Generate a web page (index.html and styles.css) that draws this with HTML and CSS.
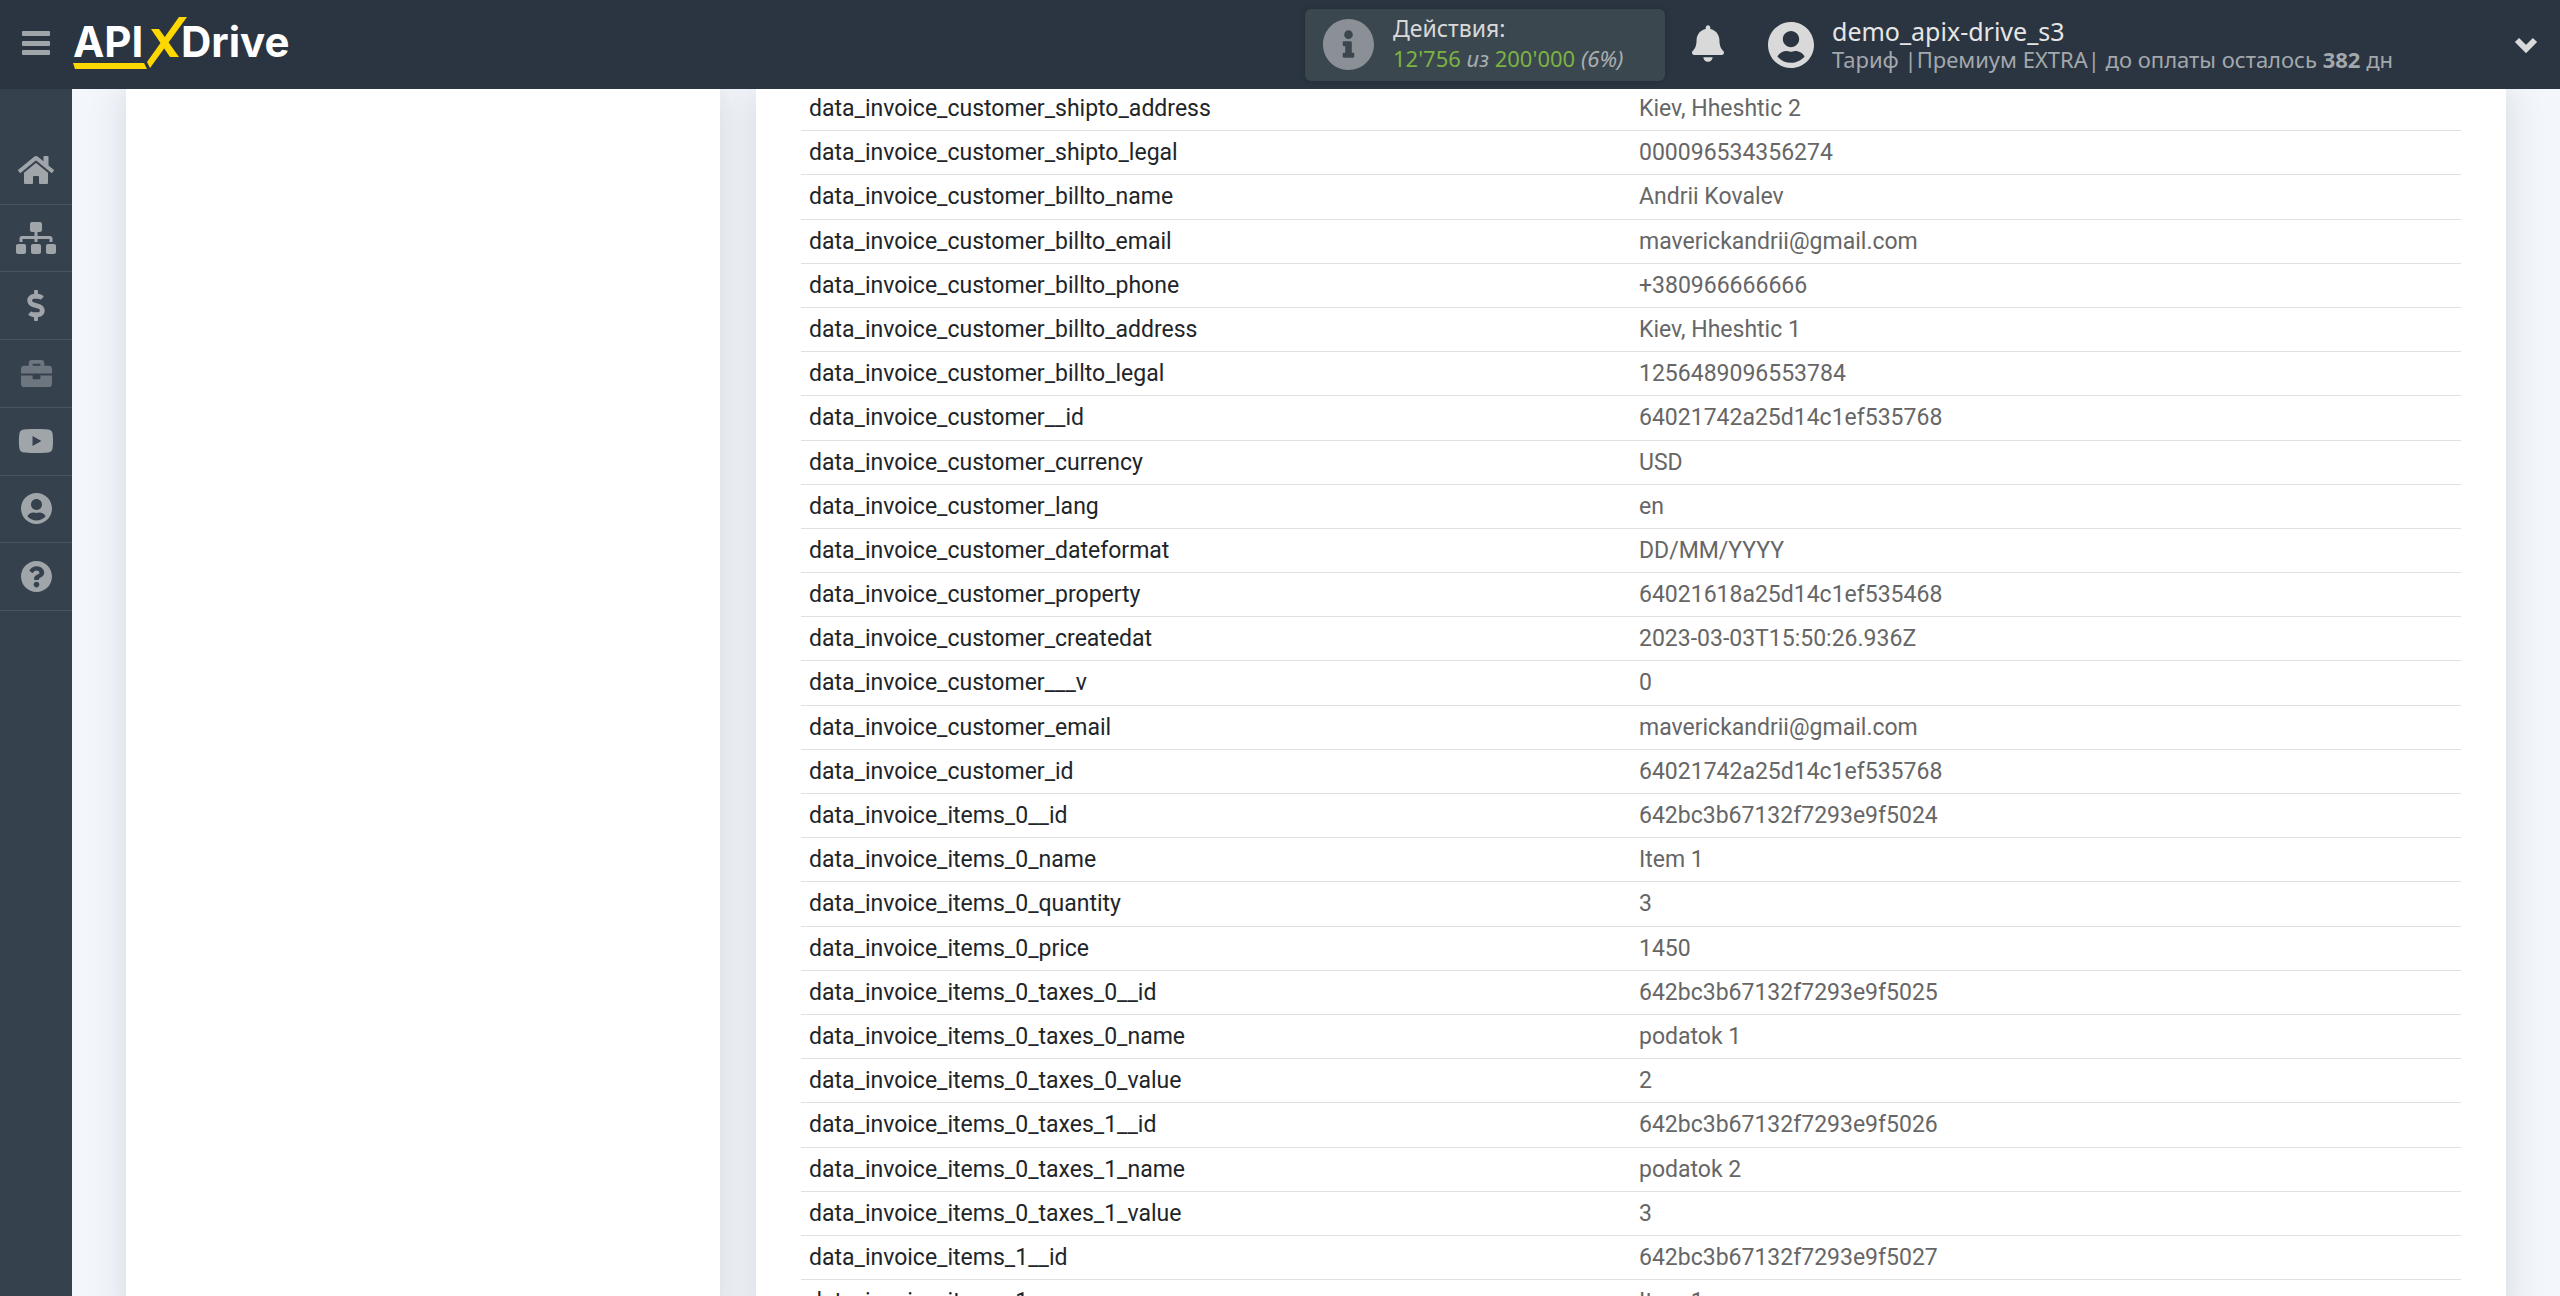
FILE: index.html
```html
<!DOCTYPE html>
<html lang="ru">
<head>
<meta charset="utf-8">
<title>APIXDrive</title>
<link rel="stylesheet" href="styles.css">
</head>
<body>
<header class="topbar">
  <button class="menu-toggle" type="button" aria-label="Меню">
    <svg width="28" height="26" viewBox="0 0 28 26"><rect y="1" width="28" height="5" rx="1"/><rect y="11" width="28" height="5" rx="1"/><rect y="20" width="28" height="5" rx="1"/></svg>
  </button>
  <a class="logo" href="#" aria-label="APIXDrive">
    <svg width="230" height="56" viewBox="0 0 230 56">
      <text class="logo-text" x="0" y="43">API</text>
      <text class="logo-text" x="108" y="43">Drive</text>
      <path class="logo-mark" d="M0 49H71L74 55H2Z"/>
      <path class="logo-mark" d="M106 3H114L77 54L74 48Z"/>
      <path class="logo-mark" d="M78 15H86L106 43H97Z"/>
    </svg>
  </a>
  <section class="usage">
    <svg class="usage-icon" viewBox="8 8 496 496"><path d="M256 8C119.043 8 8 119.083 8 256c0 136.997 111.043 248 248 248s248-111.003 248-248C504 119.083 392.957 8 256 8zm0 110c23.196 0 42 18.804 42 42s-18.804 42-42 42-42-18.804-42-42 18.804-42 42-42zm56 254c0 6.627-5.373 12-12 12h-88c-6.627 0-12-5.373-12-12v-24c0-6.627 5.373-12 12-12h12v-64h-12c-6.627 0-12-5.373-12-12v-24c0-6.627 5.373-12 12-12h64c6.627 0 12 5.373 12 12v100h12c6.627 0 12 5.373 12 12v24z"/></svg>
    <div class="usage-text">
      <div class="usage-title">Действия:</div>
      <div class="usage-count"><b>12'756</b> <i>из</i> <b>200'000</b> <i>(6%)</i></div>
    </div>
  </section>
  <button class="bell" type="button" aria-label="Уведомления">
    <svg width="32" height="37" viewBox="0 0 448 512"><path d="M224 512c35.32 0 63.97-28.65 63.97-64H160.03c0 35.35 28.65 64 63.97 64zm215.39-149.71c-19.32-20.76-55.47-51.99-55.47-154.29 0-77.7-54.48-139.9-127.94-155.16V32c0-17.67-14.32-32-31.98-32s-31.98 14.33-31.98 32v20.84C118.56 68.1 64.08 130.3 64.08 208c0 102.3-36.15 133.53-55.47 154.29-6 6.45-8.66 14.16-8.61 21.71.11 16.4 12.98 32 32.1 32h383.8c19.12 0 32-15.6 32.1-32 .05-7.55-2.61-15.27-8.61-21.71z"/></svg>
  </button>
  <button class="account" type="button">
    <svg class="avatar" viewBox="0 8 496 496"><path d="M248 8C111 8 0 119 0 256s111 248 248 248 248-111 248-248S385 8 248 8zm0 96c48.600 0 88 39.400 88 88s-39.400 88-88 88-88-39.400-88-88 39.400-88 88-88zm0 344c-58.700 0-111.300-26.600-146.500-68.200 18.800-35.400 55.600-59.800 98.500-59.800 2.400 0 4.800.4 7.100 1.100 13 4.200 26.600 6.900 40.900 6.900 14.300 0 28-2.700 40.900-6.900 2.300-.7 4.700-1.100 7.100-1.100 42.900 0 79.700 24.400 98.500 59.800C359.300 421.400 306.700 448 248 448z"/></svg>
    <span class="account-text">
      <span class="account-name">demo_apix-drive_s3</span>
      <span class="account-plan">Тариф |Премиум EXTRA| до оплаты осталось <b>382</b> дн</span>
    </span>
    <svg class="chevron" width="24" height="17" viewBox="0 0 24 17"><path d="M3 4L12 13L21 4"/></svg>
  </button>
</header>

<nav class="sidebar">
  <div class="sidebar-list">
    <a href="#" aria-label="Главная"><svg width="36" height="32" viewBox="0 0 576 512"><path d="M280.370 148.260L96 300.110V464a16 16 0 0 0 16 16l112.060-.29a16 16 0 0 0 15.920-16V368a16 16 0 0 1 16-16h64a16 16 0 0 1 16 16v95.640a16 16 0 0 0 16 16.050L464 480a16 16 0 0 0 16-16V300L295.670 148.260a12.190 12.190 0 0 0-15.300 0zM571.600 251.470L488 182.560V44.050a12 12 0 0 0-12-12h-56a12 12 0 0 0-12 12v72.610L318.470 43a48 48 0 0 0-61 0L4.340 251.470a12 12 0 0 0-1.600 16.900l25.500 31A12 12 0 0 0 45.150 301l235.220-193.740a12.190 12.190 0 0 1 15.300 0L530.900 301a12 12 0 0 0 16.900-1.600l25.500-31a12 12 0 0 0-1.700-16.930z"/></svg></a>
    <a href="#" aria-label="Связи"><svg width="40" height="32" viewBox="0 0 640 512"><path d="M128 352H32c-17.670 0-32 14.330-32 32v96c0 17.670 14.330 32 32 32h96c17.670 0 32-14.330 32-32v-96c0-17.670-14.330-32-32-32zm-24-80h192v48h48v-48h192v48h48v-57.590c0-21.170-17.230-38.410-38.410-38.410H344v-64h40c17.670 0 32-14.330 32-32V32c0-17.670-14.330-32-32-32H256c-17.670 0-32 14.330-32 32v96c0 17.670 14.330 32 32 32h40v64H94.410C73.230 224 56 241.230 56 262.410V320h48v-48zm264 80h-96c-17.670 0-32 14.330-32 32v96c0 17.670 14.330 32 32 32h96c17.670 0 32-14.330 32-32v-96c0-17.670-14.330-32-32-32zm240 0h-96c-17.670 0-32 14.330-32 32v96c0 17.670 14.330 32 32 32h96c17.670 0 32-14.330 32-32v-96c0-17.670-14.330-32-32-32z"/></svg></a>
    <a href="#" aria-label="Оплата"><svg width="18" height="31" viewBox="0 0 288 512"><path d="M209.200 233.400l-108-31.600C88.700 198.200 80 186.500 80 173.500c0-16.300 13.200-29.500 29.500-29.500h66.300c12.200 0 24.200 3.700 34.200 10.500 6.100 4.100 14.300 3.100 19.500-2l34.800-34c7.100-6.900 6.100-18.400-1.800-24.500C238 74.800 207.400 64.100 176 64V16c0-8.800-7.200-16-16-16h-32c-8.800 0-16 7.200-16 16v48h-2.500C45.800 64-5.400 118.700.5 183.600c4.200 46.100 39.400 83.600 83.800 96.600l102.500 30c12.500 3.700 21.200 15.300 21.200 28.300 0 16.300-13.200 29.500-29.500 29.500h-66.300C100 368 88 364.300 78 357.500c-6.100-4.100-14.300-3.100-19.500 2l-34.800 34c-7.100 6.900-6.100 18.400 1.800 24.500 24.500 19.200 55.100 29.900 86.500 30v48c0 8.800 7.200 16 16 16h32c8.800 0 16-7.200 16-16v-48.200c46.600-.9 90.300-28.600 105.700-72.700 21.500-61.600-14.600-124.800-72.500-141.700z"/></svg></a>
    <a class="muted" href="#" aria-label="Услуги"><svg width="31" height="31" viewBox="0 0 512 512"><path d="M320 336c0 8.840-7.160 16-16 16h-96c-8.840 0-16-7.160-16-16v-48H0v144c0 25.600 22.400 48 48 48h416c25.600 0 48-22.400 48-48V288H320v48zm144-208h-80V80c0-25.600-22.400-48-48-48H176c-25.600 0-48 22.400-48 48v48H48c-25.600 0-48 22.400-48 48v80h512v-80c0-25.600-22.400-48-48-48zm-144 0H192V96h128v32z"/></svg></a>
    <a href="#" aria-label="Видео"><svg width="36" height="32" viewBox="0 0 576 512"><path d="M549.655 124.083c-6.281-23.650-24.787-42.276-48.284-48.597C458.781 64 288 64 288 64S117.220 64 74.629 75.486c-23.497 6.322-42.003 24.947-48.284 48.597-11.412 42.867-11.412 132.305-11.412 132.305s0 89.438 11.412 132.305c6.281 23.650 24.787 41.500 48.284 47.821C117.220 448 288 448 288 448s170.780 0 213.371-11.486c23.497-6.321 42.003-24.171 48.284-47.821 11.412-42.867 11.412-132.305 11.412-132.305s0-89.438-11.412-132.305zm-317.510 213.508V175.185l142.739 81.205-142.739 81.201z"/></svg></a>
    <a href="#" aria-label="Профиль"><svg width="31" height="31" viewBox="0 8 496 496"><path d="M248 8C111 8 0 119 0 256s111 248 248 248 248-111 248-248S385 8 248 8zm0 96c48.600 0 88 39.400 88 88s-39.400 88-88 88-88-39.400-88-88 39.400-88 88-88zm0 344c-58.700 0-111.300-26.600-146.500-68.200 18.800-35.400 55.600-59.800 98.500-59.800 2.400 0 4.800.4 7.100 1.100 13 4.200 26.600 6.900 40.900 6.900 14.300 0 28-2.700 40.900-6.900 2.300-.7 4.700-1.100 7.100-1.100 42.900 0 79.700 24.400 98.500 59.800C359.300 421.400 306.700 448 248 448z"/></svg></a>
    <a href="#" aria-label="Помощь"><svg width="31" height="31" viewBox="8 8 496 496"><path d="M504 256c0 136.997-111.043 248-248 248S8 392.997 8 256C8 119.083 119.043 8 256 8s248 111.083 248 248zM262.655 90c-54.497 0-89.255 22.957-116.549 63.758-3.536 5.286-2.353 12.415 2.715 16.258l34.699 26.310c5.205 3.947 12.621 3.008 16.665-2.122 17.864-22.658 30.113-35.797 57.303-35.797 20.429 0 45.698 13.148 45.698 32.958 0 14.976-12.363 22.667-32.534 33.976C247.128 238.528 216 254.941 216 296v4c0 6.627 5.373 12 12 12h56c6.627 0 12-5.373 12-12v-1.333c0-28.462 83.186-29.647 83.186-106.667 0-58.002-60.165-102-116.531-102zM256 338c-25.365 0-46 20.635-46 46 0 25.364 20.635 46 46 46s46-20.636 46-46c0-25.365-20.635-46-46-46z"/></svg></a>
  </div>
</nav>

<main class="content">
  <aside class="card"></aside>
  <section class="card card-data">
    <table class="fields">
      <tbody>
        <tr><th scope="row">data_invoice_customer_shipto_address</th><td>Kiev, Hheshtic 2</td></tr>
        <tr><th scope="row">data_invoice_customer_shipto_legal</th><td>000096534356274</td></tr>
        <tr><th scope="row">data_invoice_customer_billto_name</th><td>Andrii Kovalev</td></tr>
        <tr><th scope="row">data_invoice_customer_billto_email</th><td>maverickandrii@gmail.com</td></tr>
        <tr><th scope="row">data_invoice_customer_billto_phone</th><td>+380966666666</td></tr>
        <tr><th scope="row">data_invoice_customer_billto_address</th><td>Kiev, Hheshtic 1</td></tr>
        <tr><th scope="row">data_invoice_customer_billto_legal</th><td>1256489096553784</td></tr>
        <tr><th scope="row">data_invoice_customer__id</th><td>64021742a25d14c1ef535768</td></tr>
        <tr><th scope="row">data_invoice_customer_currency</th><td>USD</td></tr>
        <tr><th scope="row">data_invoice_customer_lang</th><td>en</td></tr>
        <tr><th scope="row">data_invoice_customer_dateformat</th><td>DD/MM/YYYY</td></tr>
        <tr><th scope="row">data_invoice_customer_property</th><td>64021618a25d14c1ef535468</td></tr>
        <tr><th scope="row">data_invoice_customer_createdat</th><td>2023-03-03T15:50:26.936Z</td></tr>
        <tr><th scope="row">data_invoice_customer___v</th><td>0</td></tr>
        <tr><th scope="row">data_invoice_customer_email</th><td>maverickandrii@gmail.com</td></tr>
        <tr><th scope="row">data_invoice_customer_id</th><td>64021742a25d14c1ef535768</td></tr>
        <tr><th scope="row">data_invoice_items_0__id</th><td>642bc3b67132f7293e9f5024</td></tr>
        <tr><th scope="row">data_invoice_items_0_name</th><td>Item 1</td></tr>
        <tr><th scope="row">data_invoice_items_0_quantity</th><td>3</td></tr>
        <tr><th scope="row">data_invoice_items_0_price</th><td>1450</td></tr>
        <tr><th scope="row">data_invoice_items_0_taxes_0__id</th><td>642bc3b67132f7293e9f5025</td></tr>
        <tr><th scope="row">data_invoice_items_0_taxes_0_name</th><td>podatok 1</td></tr>
        <tr><th scope="row">data_invoice_items_0_taxes_0_value</th><td>2</td></tr>
        <tr><th scope="row">data_invoice_items_0_taxes_1__id</th><td>642bc3b67132f7293e9f5026</td></tr>
        <tr><th scope="row">data_invoice_items_0_taxes_1_name</th><td>podatok 2</td></tr>
        <tr><th scope="row">data_invoice_items_0_taxes_1_value</th><td>3</td></tr>
        <tr><th scope="row">data_invoice_items_1__id</th><td>642bc3b67132f7293e9f5027</td></tr>
        <tr><th scope="row">data_invoice_items_1_name</th><td>Item 1</td></tr>
      </tbody>
    </table>
  </section>
</main>
</body>
</html>
```

FILE: styles.css
```css
* {
  box-sizing: border-box;
}

body {
  display: grid;
  grid-template: 89px minmax(0, 1fr) / 72px minmax(0, 1fr);
  height: 100vh;
  margin: 0;
  overflow: hidden;
  background: #f3f6fb;
  font-family: "Noto Sans", "Open Sans", sans-serif;
}

button {
  padding: 0;
  border: 0;
  background: none;
  color: inherit;
  font: inherit;
  text-align: left;
}

svg {
  display: block;
  flex: none;
  fill: currentColor;
}

/* Top bar */
.topbar {
  display: flex;
  grid-column: 1 / -1;
  align-items: center;
  padding: 0 22px;
  background: #2b3541;
  color: #d9d9d9;
}

.menu-toggle {
  margin-right: 23px;
  padding-bottom: 4px;
  color: #a0a5a9;
}

.logo {
  padding-bottom: 6px;
}

.logo-text {
  fill: #fff;
  font: 700 42px Inter, "Liberation Sans", sans-serif;
}

.logo-mark {
  fill: #ffd800;
}

.usage {
  display: flex;
  align-items: center;
  gap: 19px;
  width: 360px;
  height: 72px;
  margin-left: auto;
  padding: 0 18px;
  border-radius: 6px;
  background: #3b474f;
  box-shadow: 0 0 6px rgba(0, 0, 0, .2);
}

.usage-icon {
  width: 51px;
  height: 51px;
  color: #8a9096;
}

.usage-text {
  padding-bottom: 3px;
  font-size: 22px;
  line-height: 30px;
  white-space: nowrap;
}

.usage-title {
  font-size: 23px;
}

.usage-count {
  color: #a9adb0;
}

.usage-count b {
  color: #7cb342;
  font-weight: 400;
}

.bell {
  margin: 0 44px 2px 27px;
}

.account {
  display: flex;
  flex: 0 0 770px;
  align-items: center;
  gap: 18px;
}

.avatar {
  width: 46px;
  height: 46px;
}

.account-text {
  flex: 1;
  white-space: nowrap;
}

.account-name,
.account-plan {
  display: block;
  font-size: 22px;
  line-height: 28px;
}

.account-name {
  font-size: 25px;
  color: #e6e6e6;
}

.account-plan {
  color: #a3a8ad;
}

.chevron {
  fill: none;
  stroke: currentColor;
  stroke-width: 6px;
}

/* Side navigation */
.sidebar {
  padding-top: 48px;
  background: #36414e;
}

.sidebar-list {
  display: grid;
  grid-auto-rows: 1fr;
  height: 474px;
}

.sidebar a {
  display: flex;
  align-items: center;
  justify-content: center;
  border-bottom: 1px solid #4a5561;
  color: #a0a5a9;
}

.sidebar .muted {
  color: #6d757e;
}

/* Content */
.content {
  display: grid;
  grid-template-columns: 594px minmax(0, 1fr);
  gap: 36px;
  padding: 0 54px;
  overflow: hidden;
}

.card {
  background: #fff;
  box-shadow: 0 0 36px rgba(43, 53, 65, .15);
}

.card-data {
  padding: 0 45px;
}

.fields {
  width: 100%;
  margin-top: -2px;
  border-collapse: separate;
  border-spacing: 0;
  table-layout: fixed;
  font-family: Roboto, sans-serif;
  font-size: 23px;
  line-height: 1.53;
}

.fields th,
.fields td {
  padding: 4px 8px;
  border-bottom: 1px solid #dee0e2;
  color: #212529;
  font-weight: 400;
  text-align: left;
}

.fields td {
  color: #666;
}
```
